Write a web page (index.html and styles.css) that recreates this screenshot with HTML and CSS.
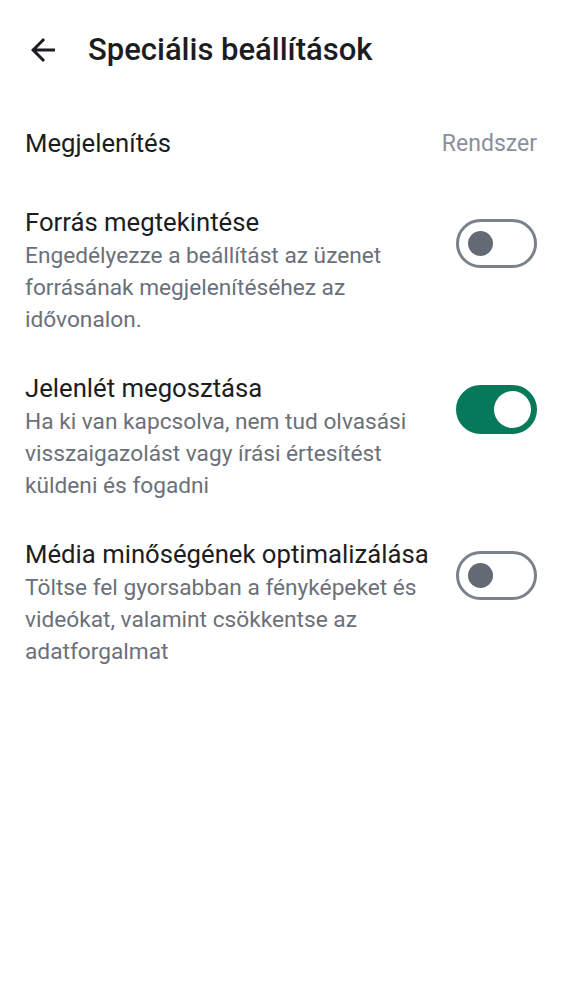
FILE: index.html
```html
<!DOCTYPE html>
<html lang="hu">
<head>
<meta charset="utf-8">
<link rel="stylesheet" href="styles.css">
</head>
<body>
<header class="topbar">
  <svg class="back" viewBox="0 0 24 24" width="36" height="36"><path d="M20 11H7.83l5.59-5.59L12 4l-8 8 8 8 1.41-1.41L7.83 13H20v-2z" fill="#1c1d21"/></svg>
  <h1 class="title">Speciális beállítások</h1>
</header>
<main class="list">
  <div class="row-simple">
    <span class="label">Megjelenítés</span>
    <span class="value">Rendszer</span>
  </div>
  <div class="item">
    <div class="text">
      <div class="item-title">Forrás megtekintése</div>
      <div class="item-desc">Engedélyezze a beállítást az üzenet forrásának megjelenítéséhez az idővonalon.</div>
    </div>
    <div class="switch"><div class="thumb"></div></div>
  </div>
  <div class="item">
    <div class="text">
      <div class="item-title">Jelenlét megosztása</div>
      <div class="item-desc">Ha ki van kapcsolva, nem tud olvasási visszaigazolást vagy írási értesítést küldeni és fogadni</div>
    </div>
    <div class="switch on"><div class="thumb"></div></div>
  </div>
  <div class="item">
    <div class="text">
      <div class="item-title">Média minőségének optimalizálása</div>
      <div class="item-desc">Töltse fel gyorsabban a fényképeket és videókat, valamint csökkentse az adatforgalmat</div>
    </div>
    <div class="switch"><div class="thumb"></div></div>
  </div>
</main>
</body>
</html>
```
FILE: styles.css
```css
html, body {
  margin: 0;
  padding: 0;
  background: #ffffff;
  font-family: Roboto, "Noto Sans", sans-serif;
  color: #1c1d21;
}
.topbar {
  height: 100px;
  display: flex;
  align-items: center;
  padding-left: 25px;
  box-sizing: border-box;
}
.back {
  display: block;
  margin-top: -1px;
}
.title {
  margin: 0 0 0 27px;
  font-size: 31px;
  font-weight: 500;
  line-height: 36px;
  color: #1c1d21;
}
.list {
  padding: 0 25px;
}
.row-simple {
  display: flex;
  justify-content: space-between;
  align-items: center;
  height: 32px;
  margin-top: 27px;
}
.label {
  font-size: 25.7px;
  color: #1c1d21;
}
.value {
  font-size: 23px;
  color: #8a9099;
}
.item {
  display: flex;
  align-items: flex-start;
  justify-content: space-between;
  margin-top: 45px;
}
.item + .item {
  margin-top: 34px;
}
.text {
  flex: 1;
  min-width: 0;
}
.item-title {
  font-size: 25.7px;
  line-height: 36px;
  color: #1c1d21;
  white-space: nowrap;
}
.item-desc {
  font-size: 22.7px;
  line-height: 32px;
  color: #6b7079;
  padding-right: 18px;
}
.switch {
  flex: none;
  width: 81px;
  height: 49px;
  box-sizing: border-box;
  border: 3px solid #7b818a;
  border-radius: 25px;
  margin-top: 15px;
  display: flex;
  align-items: center;
  padding-left: 9px;
}
.thumb {
  width: 25px;
  height: 25px;
  border-radius: 50%;
  background: #646a73;
}
.switch.on {
  background: #07795b;
  border-color: #07795b;
  justify-content: flex-end;
  padding-left: 0;
  padding-right: 3px;
}
.switch.on .thumb {
  width: 37px;
  height: 37px;
  background: #ffffff;
}
```
